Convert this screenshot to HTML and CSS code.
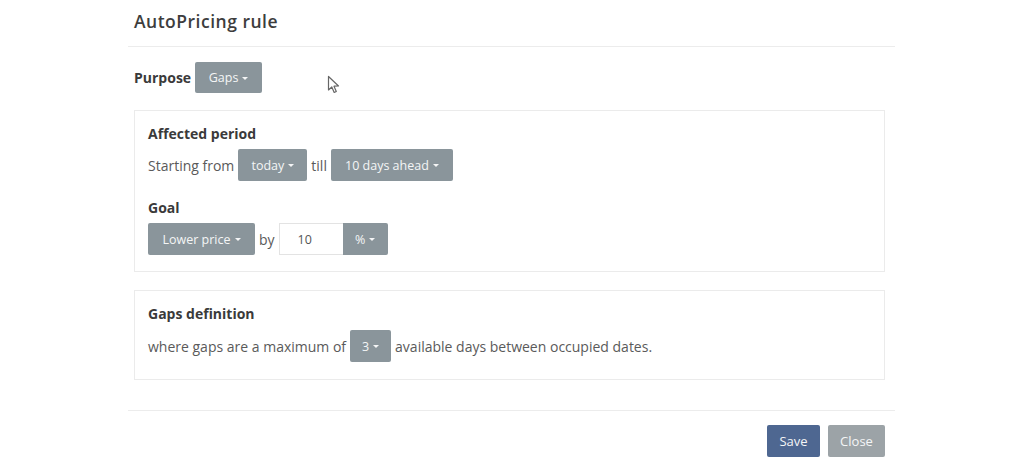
FILE: index.html
```html
<!DOCTYPE html>
<html>
<head>
<meta charset="utf-8">
<link rel="stylesheet" href="styles.css">
</head>
<body>
<div class="modal">
  <div class="modal-header"><h1 class="title">AutoPricing rule</h1></div>
  <div class="modal-body">
    <div class="row purpose">
      <span class="label">Purpose</span>
      <span class="btn w-gaps">Gaps<i class="caret"></i></span>
    </div>
    <div class="panel panel-first">
      <div class="label">Affected period</div>
      <div class="row line">
        <span class="text">Starting from</span>
        <span class="btn w-today">today<i class="caret"></i></span>
        <span class="text">till</span>
        <span class="btn w-ahead">10 days ahead<i class="caret"></i></span>
      </div>
      <div class="label goal">Goal</div>
      <div class="row line">
        <span class="btn w-lower">Lower price<i class="caret"></i></span>
        <span class="text">by</span>
        <span class="group">
          <span class="input">10</span>
          <span class="btn btn-addon w-pct">%<i class="caret"></i></span>
        </span>
      </div>
    </div>
    <div class="panel panel-second">
      <div class="label">Gaps definition</div>
      <div class="row line">
        <span class="text">where gaps are a maximum of</span>
        <span class="btn w-three">3<i class="caret"></i></span>
        <span class="text">available days between occupied dates.</span>
      </div>
    </div>
  </div>
  <div class="modal-footer">
    <span class="btn btn-save">Save</span>
    <span class="btn btn-close">Close</span>
  </div>
  <svg class="cursor" width="14" height="20" viewBox="0 0 14 20"><path d="M1.5 1.5 L1.5 15 L4.8 12 L7.2 17.5 L9.3 16.5 L7 11.2 L11.5 11 Z" fill="#fff" stroke="#666" stroke-width="1.2" stroke-linejoin="round"/></svg>
</div>
</body>
</html>
```
FILE: styles.css
```css
html, body {
  margin: 0;
  padding: 0;
  background: #fff;
}
body {
  font-family: "Open Sans", "Liberation Sans", sans-serif;
  font-size: 14px;
  color: #5a5a5a;
}
.modal {
  position: relative;
  margin-left: 128px;
  width: 767px;
}
.modal-header {
  height: 46px;
  border-bottom: 1px solid #ececec;
  padding-left: 6px;
  display: flex;
  align-items: center;
}
.title {
  margin: 0;
  margin-top: -4px;
  font-size: 17.5px;
  font-weight: 600;
  color: #3d3d3d;
  letter-spacing: 0.5px;
}
.modal-body {
  padding: 15px 10px 30px 6px;
}
.row {
  display: flex;
  align-items: center;
}
.label {
  font-weight: 700;
  color: #3a3a3a;
  line-height: 20px;
}
.purpose .label {
  margin-right: 4px;
}
.purpose .btn {
  height: 31px;
}
.panel {
  border: 1px solid #ebebeb;
  padding: 13px 14px 16px 13px;
}
.panel-first {
  margin-top: 17px;
}
.panel-second {
  margin-top: 18px;
  padding-bottom: 17px;
}
.line {
  margin-top: 5px;
}
.panel-second .line {
  margin-top: 6px;
}
.goal {
  margin-top: 17px;
}
.text {
  margin: 0 4px;
}
.line .text:first-child {
  margin-left: 0;
}
.btn {
  display: inline-flex;
  align-items: center;
  justify-content: center;
  box-sizing: border-box;
  height: 32px;
  background: #8a959b;
  color: #f4f5f6;
  font-size: 12.5px;
  border-radius: 2px;
  padding: 0 10px;
}
.caret {
  display: inline-block;
  width: 0;
  height: 0;
  border-left: 3px solid transparent;
  border-right: 3px solid transparent;
  border-top: 3px solid #f4f5f6;
  margin-left: 4px;
  margin-top: 1px;
}
.w-gaps { width: 67px; }
.w-today { width: 69px; }
.w-ahead { width: 122px; }
.w-lower { width: 107px; }
.w-three { width: 41px; }
.w-pct { width: 45px; }
.group {
  display: inline-flex;
}
.input {
  box-sizing: border-box;
  width: 64px;
  height: 32px;
  border: 1px solid #e3e3e3;
  border-right: none;
  display: flex;
  align-items: center;
  padding-left: 18px;
  font-size: 12.5px;
  color: #555;
}
.btn-addon {
  border-radius: 0 2px 2px 0;
}
.modal-footer {
  border-top: 1px solid #ececec;
  padding: 14px 10px 0 0;
  display: flex;
  justify-content: flex-end;
  gap: 8px;
}
.btn-save {
  width: 53px;
  background: #4e6791;
  font-size: 13px;
}
.btn-close {
  width: 57px;
  background: #9ca3a7;
  font-size: 13px;
}
.cursor {
  position: absolute;
  left: 199px;
  top: 75px;
}
```
